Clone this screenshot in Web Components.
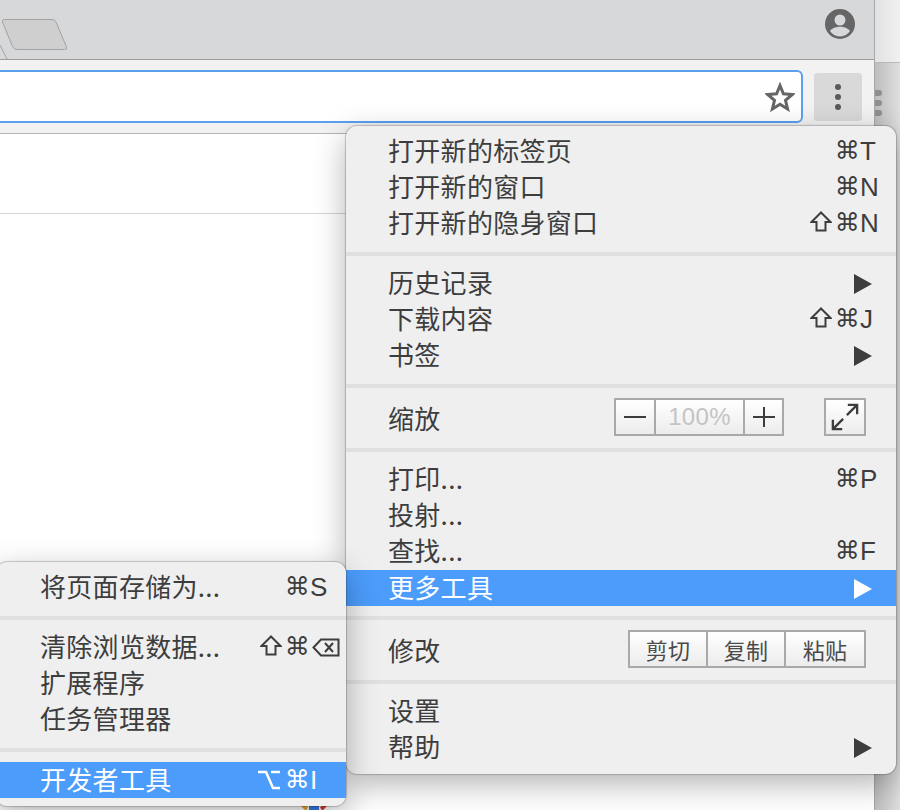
<!DOCTYPE html>
<html lang="zh">
<head>
<meta charset="utf-8">
<title>Chrome menu</title>
<style>
  html, body { margin: 0; height: 810px; overflow: hidden; background: #fff; }
  body { position: relative; font-family: "Noto Sans CJK SC", "Liberation Sans", sans-serif; color: #3d3d3d; }
  #main-menu { position: absolute; left: 346px; top: 126px; width: 550px; }
  #sub-menu { position: absolute; left: -4px; top: 562px; width: 350px; --indent: 44px; }
</style>
</head>
<body>
<browser-window></browser-window>

<app-menu id="main-menu">
  <menu-item shortcut="⌘T">打开新的标签页</menu-item>
  <menu-item shortcut="⌘N">打开新的窗口</menu-item>
  <menu-item shortcut="⇧⌘N">打开新的隐身窗口</menu-item>
  <menu-sep></menu-sep>
  <menu-item arrow>历史记录</menu-item>
  <menu-item shortcut="⇧⌘J">下载内容</menu-item>
  <menu-item arrow>书签</menu-item>
  <menu-sep></menu-sep>
  <zoom-row>缩放</zoom-row>
  <menu-sep></menu-sep>
  <menu-item shortcut="⌘P">打印...</menu-item>
  <menu-item>投射...</menu-item>
  <menu-item shortcut="⌘F">查找...</menu-item>
  <menu-item arrow active>更多工具</menu-item>
  <menu-sep></menu-sep>
  <edit-row>修改</edit-row>
  <menu-sep></menu-sep>
  <menu-item>设置</menu-item>
  <menu-item arrow>帮助</menu-item>
</app-menu>

<app-menu id="sub-menu">
  <menu-item shortcut="⌘S">将页面存储为...</menu-item>
  <menu-sep></menu-sep>
  <menu-item shortcut="⇧⌘⌫">清除浏览数据...</menu-item>
  <menu-item>扩展程序</menu-item>
  <menu-item>任务管理器</menu-item>
  <menu-sep></menu-sep>
  <menu-item shortcut="⌥⌘I" active>开发者工具</menu-item>
</app-menu>

<script>
class BrowserWindow extends HTMLElement {
  constructor() {
    super()
    this.attachShadow({ mode: "open" })
    this.shadowRoot.innerHTML = `
      <style>
        :host { display: flex; height: 810px; }
        .window { width: 875px; flex: none; display: flex; flex-direction: column; border-right: 1px solid #a8a8a8; box-sizing: border-box; }
        .desktop { flex: 1; display: flex; flex-direction: column; }
        .desktop .top { height: 62px; flex: none; background: linear-gradient(90deg, #e2e2e2, #f0f0f0); border-bottom: 1px solid #b9b9b9; }
        .desktop .rest { flex: 1; background: linear-gradient(90deg, #bdbdbd, #dfdfdf); position: relative; }
        .desktop i { position: absolute; left: 0; width: 7px; height: 6px; border-radius: 0 3px 3px 0; background: #8e8e8e; }
        .tabs { height: 59px; flex: none; background: #d6d8da; border-bottom: 1px solid #9b9b9b; display: flex; justify-content: flex-end; position: relative; }
        .tab { position: absolute; left: 0; top: 18px; }
        .avatar { margin: 8px 18px 0 0; width: 32px; height: 32px; }
        .toolbar { height: 73px; flex: none; background: #f2f2f2; border-bottom: 1px solid #b4b4b4; display: flex; align-items: center; gap: 11px; padding-right: 12px; }
        .omnibox { flex: 1; height: 49px; margin-left: -12px; background: #fff; border: 2px solid #5aa0ef; border-radius: 6px; display: flex; align-items: center; justify-content: flex-end; padding-right: 6px; }
        .more { width: 48px; height: 48px; border-radius: 3px; background: #d9d9d9; display: flex; flex-direction: column; align-items: center; justify-content: center; gap: 4px; }
        .more b { width: 6px; height: 6px; border-radius: 50%; background: #5a5a5a; }
        .page { flex: 1; background: #fff; }
        .infobar { height: 79px; border-bottom: 1px solid #d4d4d4; }
        .logo { position: absolute; left: 300px; top: 800px; }
      </style>
      <div class="window">
        <div class="tabs">
          <svg class="tab" width="80" height="42" viewBox="0 0 80 42">
            <path d="M0 27 L7 41" fill="none" stroke="#a3a3a3" stroke-width="1"/>
            <path d="M3.5 1.500 H52 Q55 1.500 56 4 L66.500 29 Q67.500 31.500 64.500 31.500 H17 Q14 31.500 12.500 28.500 L2.500 4 Q2 1.500 3.500 1.500 Z" fill="#cfcfcf" stroke="#a3a3a3" stroke-width="1"/>
          </svg>
          <svg class="avatar" viewBox="0 0 32 32">
            <path fill="#666" d="M16 1a15 15 0 1 0 0 30a15 15 0 0 0 0-30zm0 5.500a5.500 5.500 0 1 1 0 11a5.500 5.500 0 0 1 0-11zm0 22a11.800 11.800 0 0 1-10-5.400c1.500-2.900 6.600-4.300 10-4.300s8.500 1.400 10 4.300a11.800 11.800 0 0 1-10 5.400z"/>
          </svg>
        </div>
        <div class="toolbar">
          <div class="omnibox">
            <svg width="30" height="30" viewBox="0 0 30 30">
              <path fill="none" stroke="#666" stroke-width="3" stroke-linejoin="miter" d="M15 3.500l3.400 8.300 8.900.7-6.800 5.800 2.100 8.700L15 22.300l-7.600 4.700 2.100-8.700-6.800-5.800 8.900-.7z"/>
            </svg>
          </div>
          <div class="more"><b></b><b></b><b></b></div>
        </div>
        <div class="page"><div class="infobar"></div></div>
      </div>
      <div class="desktop">
        <div class="top"></div>
        <div class="rest"><i style="top:27px"></i><i style="top:37px"></i><i style="top:47px"></i></div>
      </div>
      <svg class="logo" width="28" height="10" viewBox="0 0 28 10">
        <path d="M1 0a13 13 0 0 0 6 9" fill="none" stroke="#e0a92e" stroke-width="4"/>
        <path d="M9 3a6 6 0 0 0 10 0v7H9z" fill="#3b78e7"/>
        <path d="M27 0a13 13 0 0 1-6 9" fill="none" stroke="#d6402f" stroke-width="4"/>
      </svg>
    `
  }
}
customElements.define('browser-window', BrowserWindow)

class AppMenu extends HTMLElement {
  constructor() {
    super()
    this.attachShadow({ mode: "open" })
    this.shadowRoot.innerHTML = `
      <style>
        :host { display: block; }
        .panel {
          background: #efefef;
          border-radius: 11px;
          box-shadow: 0 0 1px 1px rgba(0,0,0,.2), 0 10px 32px rgba(0,0,0,.3);
          padding: 7px 0 9px;
          display: flex;
          flex-direction: column;
        }
      </style>
      <div class="panel"><slot></slot></div>
    `
  }
}
customElements.define('app-menu', AppMenu)

// modifier keys are drawn, the mac glyphs in DejaVu are too narrow
const keyIcons = {
  '⇧': '<svg class="shift" width="22" height="21" viewBox="0 0 22 21"><title>⇧</title><path d="M11 1.500L20.500 11H15.500V19.500H6.500V11H1.500Z" fill="none" stroke="currentColor" stroke-width="2"/></svg>',
  '⌥': '<svg class="opt" width="22" height="20" viewBox="0 0 22 20"><title>⌥</title><path d="M0 2H8L15 18H22M13 2H22" fill="none" stroke="currentColor" stroke-width="2.500"/></svg>',
  '⌫': '<svg width="28" height="19" viewBox="0 0 28 19"><title>⌫</title><path d="M1.500 9.500L9 1.500H26.500V17.500H9ZM13 5L21 14M21 5L13 14" fill="none" stroke="currentColor" stroke-width="2"/></svg>'
}

function keyMarkup(ch) {
  if (keyIcons[ch]) return keyIcons[ch]
  if (ch === '⌘') return '<span class="cmd">⌘</span>'
  return '<span class="letter">' + ch + '</span>'
}

class MenuItem extends HTMLElement {
  constructor() {
    super()
    this.attachShadow({ mode: "open" })
    this.shadowRoot.innerHTML = `
      <style>
        :host { display: flex; align-items: center; height: 36px; padding-left: var(--indent, 42px); font-size: 26px; letter-spacing: .3px; color: #3d3d3d; }
        :host([active]) { background: #4c9cfb; color: #fff; margin: 1px 0 -1px; }
        .label { flex: 1; white-space: nowrap; line-height: 34px; padding-bottom: 2px; }
        .mods { display: flex; align-items: center; gap: 3px; }
        .mods svg, .key svg { display: block; }
        .shift { margin-bottom: 3px; }
        .opt { margin-right: 2px; }
        .key { width: 36px; flex: none; display: flex; align-items: center; }
        .cmd { font: 25px/36px "DejaVu Sans", sans-serif; }
        .letter { font: 26px/36px "Liberation Sans", sans-serif; }
        .key svg { margin-left: 2px; }
        .arrow { display: block; margin: 2px 24px 0 0; }
        .arrow path { fill: currentColor; }
      </style>
      <span class="label"><slot></slot></span>
      <span class="mods"></span>
      <span class="key"></span>
    `
  }

  connectedCallback() {
    const mods = this.shadowRoot.querySelector('.mods')
    const key = this.shadowRoot.querySelector('.key')
    if (this.hasAttribute('arrow')) {
      mods.innerHTML = '<svg class="arrow" width="18" height="20" viewBox="0 0 18 20"><path d="M0 0L18 10L0 20z"/></svg>'
      key.style.display = 'none'
      return
    }
    const chars = Array.from(this.getAttribute('shortcut') || '')
    if (!chars.length) return
    key.innerHTML = keyMarkup(chars.pop())
    mods.innerHTML = chars.map(keyMarkup).join('')
  }
}
customElements.define('menu-item', MenuItem)

class MenuSep extends HTMLElement {
  constructor() {
    super()
    this.attachShadow({ mode: "open" })
    this.shadowRoot.innerHTML = `
      <style>
        :host { display: block; height: 4px; margin: 11px 0 9px; background: #e0e0e0; }
      </style>
    `
  }
}
customElements.define('menu-sep', MenuSep)

const rowStyles = `
  :host { display: flex; align-items: center; height: 40px; padding-left: 42px; font-size: 26px; letter-spacing: .3px; color: #3d3d3d; }
  .label { width: 226px; white-space: nowrap; }
  .group { display: flex; height: 38px; box-sizing: border-box; border: 2px solid #a9a9a9; background: linear-gradient(#fff, #ececec); }
  .cell { display: flex; align-items: center; justify-content: center; box-sizing: border-box; height: 100%; }
  .cell + .cell { border-left: 2px solid #a9a9a9; }
`

class ZoomRow extends HTMLElement {
  constructor() {
    super()
    this.attachShadow({ mode: "open" })
    this.shadowRoot.innerHTML = `
      <style>${rowStyles}
        .pct { width: 89px; font: 24px "Liberation Sans", sans-serif; color: #c4c4c4; }
        .full { margin-left: 40px; width: 42px; }
      </style>
      <span class="label"><slot></slot></span>
      <div class="group">
        <div class="cell" style="width:38px"><svg width="24" height="24" viewBox="0 0 24 24"><path d="M1 12H23" stroke="#3d3d3d" stroke-width="2"/></svg></div>
        <div class="cell pct">100%</div>
        <div class="cell" style="width:39px"><svg width="24" height="24" viewBox="0 0 24 24"><path d="M1 12H23M12 2V22" stroke="#3d3d3d" stroke-width="2"/></svg></div>
      </div>
      <div class="group full">
        <div class="cell" style="width:100%">
          <svg width="28" height="28" viewBox="0 0 30 30" fill="none" stroke="#3d3d3d" stroke-width="2.500">
            <path d="M17 13L28 2M18 2H28V12"/><path d="M13 17L2 28M2 18V28H12"/>
          </svg>
        </div>
      </div>
    `
  }
}
customElements.define('zoom-row', ZoomRow)

class EditRow extends HTMLElement {
  constructor() {
    super()
    this.attachShadow({ mode: "open" })
    this.shadowRoot.innerHTML = `
      <style>${rowStyles}
        .label { width: 240px; }
        .cell { font-size: 22px; color: #4a4a4a; }
      </style>
      <span class="label"><slot></slot></span>
      <div class="group">
        <div class="cell" style="width:76px">剪切</div>
        <div class="cell" style="width:78px">复制</div>
        <div class="cell" style="width:80px">粘贴</div>
      </div>
    `
  }
}
customElements.define('edit-row', EditRow)
</script>
</body>
</html>
